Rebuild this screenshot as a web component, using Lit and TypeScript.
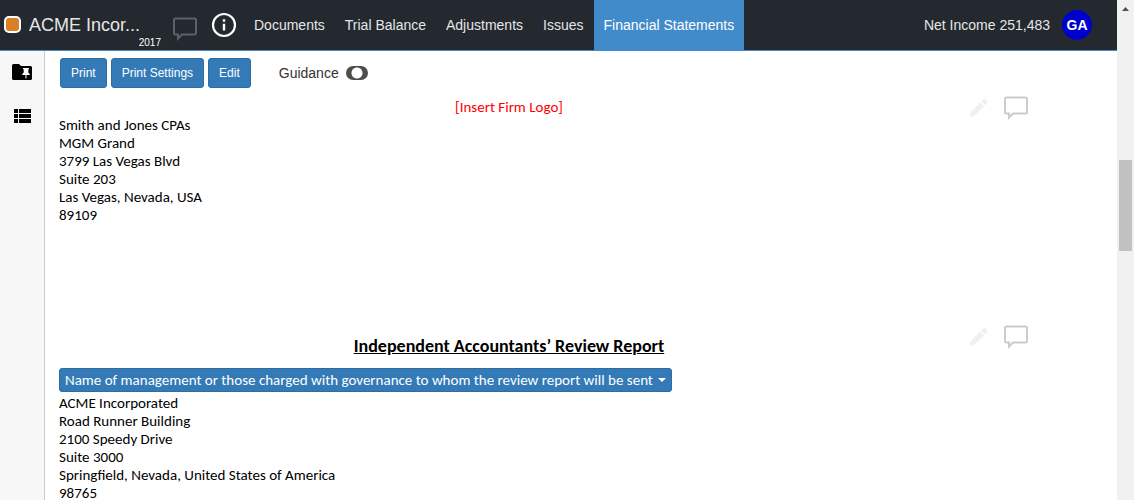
import { LitElement, html, css } from "lit";
import { customElement, property } from "lit/decorators.js";

@customElement("comment-icon")
class CommentIcon extends LitElement {
  static styles = css`
    :host { display: block; width: 26px; height: 24px; color: #ccc; }
    .glyph { display: block; }
  `;
  render() {
    return html`<svg class="glyph" width="26" height="24" viewBox="0 0 26 24" fill="none"
      stroke="currentColor" stroke-width="2">
      <path d="M3.500 1.500H22.500Q24 1.500 24 3V16Q24 17.500 22.500 17.500H10L6 21.500V17.500H3.500Q2 17.500 2 16V3Q2 1.500 3.500 1.500Z" />
    </svg>`;
  }
}

@customElement("report-section")
class ReportSection extends LitElement {
  @property() label = "";
  static styles = css`
    :host { display: grid; grid-template-columns: minmax(0, 900px) auto; column-gap: 10px; align-items: start; }
    .tools { display: flex; gap: 14px; }
    .tool { padding: 0; border: 0; background: none; display: block; }
    .pencil { display: block; width: 20px; height: 24px; }
  `;
  render() {
    return html`
      <div><slot></slot></div>
      <div class="tools">
        <button class="tool" aria-label="Edit ${this.label}">
          <svg class="pencil" viewBox="0 0 20 24" fill="#f0f0f0">
            <path d="M1 17V20.500H4.800L15 10.300L11.200 6.500ZM12.300 5.400L14.600 3.100Q15.300 2.400 16 3.100L18.400 5.500Q19.100 6.200 18.400 6.900L16.100 9.200Z" />
          </svg>
        </button>
        <button class="tool" aria-label="Comment on ${this.label}"><comment-icon></comment-icon></button>
      </div>`;
  }
}

@customElement("app-root")
class AppRoot extends LitElement {
  static styles = css`
    :host {
      display: flex;
      height: 100vh;
      overflow: hidden;
      background: #fff;
      font: 14px/20px "Liberation Sans", Arial, sans-serif;
      color: #333;
    }
    .page { flex: 1; min-width: 0; display: flex; flex-direction: column; }
    .header { display: flex; height: 50px; flex: none; background: #23292f; border-bottom: 1px solid #428bca; color: #e6e6e6; }
    .brand { display: flex; padding: 0 11px 0 4px; }
    .status { box-sizing: border-box; width: 17px; height: 17px; margin-top: 16px; border: 2px solid #fff; border-radius: 5px; background: #d98026; }
    .client { width: 132px; padding: 14px 0 0 8px; display: flex; flex-direction: column; }
    .name { font-size: 18px; line-height: 22px; white-space: nowrap; }
    .year { font-size: 10px; line-height: 14px; text-align: right; color: #fff; }
    .head-button { display: block; padding: 0; border: 0; background: none; color: inherit; }
    .head-comment { color: #5c6166; }
    .head-comment comment-icon { color: inherit; margin-top: 8px; }
    .info { margin: 0 7px 0 13px; }
    .info-icon { display: block; }
    .nav { display: flex; }
    .link { padding: 0 10px; line-height: 50px; color: #e6e6e6; text-decoration: none; white-space: nowrap; }
    .link.active { background: #428bca; color: #fff; padding-bottom: 1px; }
    .account { margin-left: auto; display: flex; align-items: center; gap: 12px; padding-right: 25px; white-space: nowrap; }
    .avatar { width: 30px; height: 30px; padding: 0; border: 0; border-radius: 50%; background: #0000cd; color: #fff; font: bold 14px "Liberation Sans", Arial, sans-serif; }
    .body { flex: 1; min-height: 0; display: flex; }
    .rail { box-sizing: border-box; width: 45px; flex: none; background: #f7f7f7; border-right: 1px solid #ccc; padding-top: 9px; display: flex; flex-direction: column; align-items: center; gap: 20px; }
    .rail-icon { display: block; }
    .main { flex: 1; min-width: 0; padding-left: 14px; overflow: hidden; }
    .toolbar { display: flex; gap: 4px; align-items: center; padding: 7px 0 8px 1px; }
    .button { height: 30px; padding: 0 10px; border: 1px solid #2e6da4; border-radius: 3px; background: #337ab7; color: #fff; font: 12px/18px "Liberation Sans", Arial, sans-serif; }
    .guidance { display: flex; align-items: center; gap: 7px; margin-left: 24px; }
    .toggle { appearance: none; margin: 0; width: 22px; height: 14px; border-radius: 7px; background: radial-gradient(circle, #fff 5px, #4d4d4d 6px); }
    .document { font: 15px/18px Carlito, Lato, sans-serif; color: #000; }
    .text { margin: 0; }
    .logo { margin: 0; padding-top: 2px; text-align: center; color: #f00; }
    .report { margin-top: 101px; }
    .title { margin: 0; padding: 11px 0 12px; font-size: 18px; line-height: 20px; text-align: center; text-decoration: underline; }
    .picker { display: inline-grid; align-items: center; margin-bottom: 2px; vertical-align: top; }
    .select { grid-area: 1 / 1; appearance: none; height: 24px; margin: 0; padding: 0 18px 0 5px; border: 1px solid #2e6da4; border-radius: 3px; background: #337ab7; color: #fff; font: 15px/18px Carlito, Lato, sans-serif; }
    .caret { grid-area: 1 / 1; justify-self: end; margin-right: 6px; pointer-events: none; }
    .scroll { width: 17px; flex: none; background: #f1f1f1; display: flex; flex-direction: column; align-items: center; }
    .arrow { display: block; height: 17px; width: 17px; }
    .thumb { width: 13px; height: 91px; margin-top: 143px; background: #c1c1c1; }
  `;

  private links = ["Documents", "Trial Balance", "Adjustments", "Issues", "Financial Statements"];
  private firm = ["Smith and Jones CPAs", "MGM Grand", "3799 Las Vegas Blvd", "Suite 203", "Las Vegas, Nevada, USA", "89109"];
  private client = ["ACME Incorporated", "Road Runner Building", "2100 Speedy Drive", "Suite 3000", "Springfield, Nevada, United States of America", "98765"];

  render() {
    return html`
      <div class="page">
        <header class="header">
          <div class="brand">
            <span class="status"></span>
            <div class="client">
              <span class="name">ACME Incor...</span>
              <span class="year">2017</span>
            </div>
          </div>
          <button class="head-button head-comment" aria-label="Comments"><comment-icon></comment-icon></button>
          <button class="head-button info" aria-label="Information">
            <svg class="info-icon" width="26" height="26" viewBox="0 0 26 26" fill="none" stroke="#fff">
              <circle cx="13" cy="13" r="11" stroke-width="2.200" />
              <path d="M13 11.800V18.500M13 7.300V9.800" stroke-width="2.400" />
            </svg>
          </button>
          <nav class="nav">
            ${this.links.map((l) => html`<a href="#" class="link ${l === "Financial Statements" ? "active" : ""}">${l}</a>`)}
          </nav>
          <div class="account">
            <span>Net Income 251,483</span>
            <button class="avatar">GA</button>
          </div>
        </header>
        <div class="body">
          <aside class="rail">
            <button class="head-button" aria-label="Pinned folder">
              <svg class="rail-icon" width="24" height="24" viewBox="0 0 24 24">
                <path d="M3.500 4H9L11 6H20.500Q22 6 22 7.500V18.500Q22 20 20.500 20H3.500Q2 20 2 18.500V5.500Q2 4 3.500 4Z" />
                <path fill="#fff" d="M13 8H19V9.300H18.300V12.500L19.700 14V15H16.500V18.500H15.500V15H12.300V14L13.700 12.500V9.300H13Z" />
              </svg>
            </button>
            <button class="head-button" aria-label="Outline">
              <svg class="rail-icon" width="24" height="24" viewBox="0 0 24 24">
                <path d="M4 5H8V9H4ZM9 5H21V9H9ZM4 10H8V14H4ZM9 10H21V14H9ZM4 15H8V19H4ZM9 15H21V19H9Z" />
              </svg>
            </button>
          </aside>
          <main class="main">
            <div class="toolbar">
              <button class="button">Print</button>
              <button class="button">Print Settings</button>
              <button class="button">Edit</button>
              <label class="guidance">Guidance <input class="toggle" type="checkbox" /></label>
            </div>
            <div class="document">
              <report-section label="letterhead">
                <p class="logo">[Insert Firm Logo]</p>
                <p class="text">${this.firm.map((l) => html`${l}<br />`)}</p>
              </report-section>
              <report-section class="report" label="review report">
                <h1 class="title">Independent Accountants’ Review Report</h1>
                <div class="picker">
                  <select class="select" aria-label="Report addressee">
                    <option>Name of management or those charged with governance to whom the review report will be sent</option>
                  </select>
                  <svg class="caret" width="8" height="4" viewBox="0 0 8 4"><path fill="#fff" d="M0 0H8L4 4Z" /></svg>
                </div>
                <p class="text">${this.client.map((l) => html`${l}<br />`)}</p>
              </report-section>
            </div>
          </main>
        </div>
      </div>
      <div class="scroll">
        <svg class="arrow" viewBox="0 0 17 17"><path fill="#505050" d="M5 11L8.500 7L12 11Z" /></svg>
        <div class="thumb"></div>
      </div>`;
  }
}
